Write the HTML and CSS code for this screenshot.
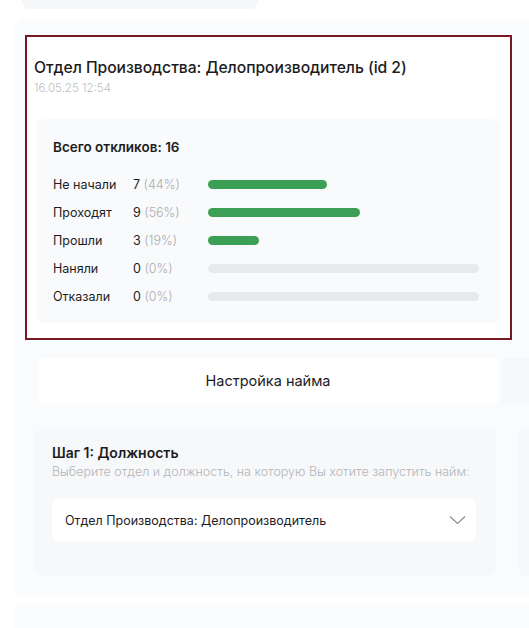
FILE: index.html
```html
<!DOCTYPE html>
<html lang="ru">
<head>
<meta charset="utf-8">
<link rel="stylesheet" href="styles.css">
</head>
<body>
<div class="top-card"></div>
<div class="panel">
  <div class="report">
    <div class="report-title">Отдел Производства: Делопроизводитель (id 2)</div>
    <div class="report-date">16.05.25 12:54</div>
    <div class="stats">
      <div class="stats-total">Всего откликов: 16</div>
      <div class="rows">
        <div class="row"><span class="lbl">Не начали</span><span class="num">7 <span class="pct">(44%)</span></span><div class="track"><div class="fill" style="width:44%"></div></div></div>
        <div class="row"><span class="lbl">Проходят</span><span class="num">9 <span class="pct">(56%)</span></span><div class="track"><div class="fill" style="width:56%"></div></div></div>
        <div class="row"><span class="lbl">Прошли</span><span class="num">3 <span class="pct">(19%)</span></span><div class="track"><div class="fill" style="width:19%"></div></div></div>
        <div class="row"><span class="lbl">Наняли</span><span class="num">0 <span class="pct">(0%)</span></span><div class="track grey"></div></div>
        <div class="row"><span class="lbl">Отказали</span><span class="num">0 <span class="pct">(0%)</span></span><div class="track grey"></div></div>
      </div>
    </div>
  </div>
  <div class="setup-row">
    <div class="setup-btn">Настройка найма</div>
    <div class="side-stub"></div>
  </div>
  <div class="step-row">
    <div class="step">
      <div class="step-title">Шаг 1: Должность</div>
      <div class="step-sub">Выберите отдел и должность, на которую Вы хотите запустить найм:</div>
      <div class="select">
        <span>Отдел Производства: Делопроизводитель</span>
        <svg width="17" height="10" viewBox="0 0 17 10"><path d="M1 1.5 L8.5 8.5 L16 1.5" fill="none" stroke="#8a8d93" stroke-width="1.2"/></svg>
      </div>
    </div>
    <div class="step-stub"></div>
  </div>
</div>
<div class="bottom-card"></div>
</body>
</html>
```
FILE: styles.css
```css
* { box-sizing: border-box; }
html, body { margin: 0; padding: 0; }
body {
  width: 529px;
  height: 628px;
  overflow: hidden;
  background: #ffffff;
  font-family: Inter, "Noto Sans", sans-serif;
  color: #1d1d1f;
}
.top-card {
  margin-left: 22px;
  width: 236px;
  height: 9px;
  background: #f6f7f9;
  border-radius: 0 0 8px 8px;
}
.panel {
  margin: 10px 0 0 14px;
  background: #fafbfc;
  border-radius: 10px 0 0 10px;
  padding: 16px 0 20px 11px;
  height: 578px;
}
.report {
  width: 487px;
  height: 305px;
  border: 2px solid #761923;
  background: #ffffff;
  padding: 21px 0 0 7px;
}
.report-title {
  font-size: 15.7px;
  font-weight: 500;
  line-height: 20px;
  color: #1c1c1e;
  letter-spacing: -0.05px;
}
.report-date {
  font-size: 11.5px;
  line-height: 14px;
  margin-top: 3px;
  color: #bbbdc1;
  font-weight: 300;
}
.stats {
  margin: 24px 0 0 2px;
  width: 464px;
  height: 204px;
  background: #f9fafb;
  border-radius: 8px;
  padding: 19px 0 0 17px;
}
.stats-total {
  font-size: 13.5px;
  font-weight: 600;
  line-height: 18px;
}
.rows {
  margin-top: 20px;
  display: flex;
  flex-direction: column;
  gap: 12px;
}
.row {
  display: flex;
  align-items: center;
  height: 16px;
  font-size: 12.5px;
}
.lbl { width: 80px; }
.num { width: 75px; }
.pct { color: #a9acb1; font-weight: 300; }
.track {
  width: 271px;
  height: 9px;
  border-radius: 5px;
  background: transparent;
}
.track.grey { background: #e8e9eb; }
.fill {
  height: 9px;
  border-radius: 5px;
  background: #3c9f56;
}
.setup-row {
  display: flex;
  margin-top: 18px;
  margin-left: 13px;
  gap: 3px;
}
.setup-btn {
  width: 460px;
  height: 46px;
  background: #ffffff;
  border-radius: 6px;
  display: flex;
  align-items: center;
  justify-content: center;
  font-size: 14.5px;
  color: #1d1d1f;
  padding-bottom: 2px;
}
.side-stub {
  flex: 1;
  height: 46px;
  background: #f7f8fa;
}
.step-row {
  display: flex;
  margin-top: 24px;
  margin-left: 9px;
  gap: 22px;
}
.step {
  width: 462px;
  height: 148px;
  background: #f7f8fa;
  border-radius: 10px;
  padding: 16px 0 0 18px;
}
.step-title {
  font-size: 14px;
  font-weight: 600;
  line-height: 18px;
}
.step-sub {
  font-size: 12.5px;
  color: #b3b5b9;
  line-height: 16px;
  margin-top: 2px;
  font-weight: 300;
  white-space: nowrap;
}
.select {
  margin-top: 19px;
  width: 424px;
  height: 42px;
  background: #ffffff;
  border-radius: 6px;
  display: flex;
  align-items: center;
  justify-content: space-between;
  padding: 0 10px 0 13px;
  font-size: 12.5px;
}
.step-stub {
  flex: 1;
  height: 148px;
  background: #f7f8fa;
  border-radius: 10px 0 0 10px;
}
.bottom-card {
  margin: 8px 0 0 14px;
  height: 30px;
  background: #fafbfc;
}
```
